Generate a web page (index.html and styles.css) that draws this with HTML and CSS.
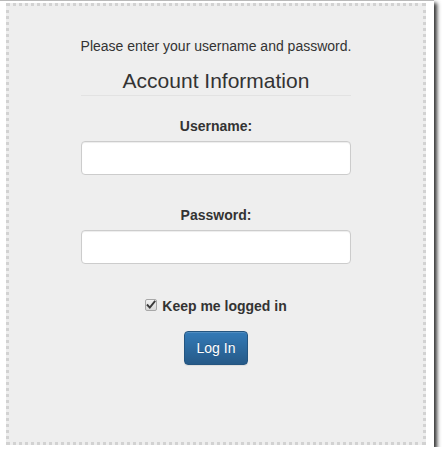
FILE: index.html
```html
<!DOCTYPE html>
<html lang="en">
<head>
<meta charset="utf-8">
<title>Log In</title>
<link rel="stylesheet" href="styles.css">
</head>
<body>
<div class="frame">
  <div class="panel">
    <form class="login">
      <p class="intro">Please enter your username and password.</p>
      <h3 class="legend">Account Information</h3>
      <div class="group first">
        <label class="field-label" for="user">Username:</label>
        <input class="field" id="user" type="text">
      </div>
      <div class="group">
        <label class="field-label" for="pass">Password:</label>
        <input class="field" id="pass" type="password">
      </div>
      <label class="remember">
        <span class="box"><svg width="12" height="12" viewBox="0 0 12 12"><path d="M2.6 6.2 L4.8 8.6 L9.6 2.6" fill="none" stroke="#3a3a3a" stroke-width="1.9" stroke-linecap="square"/></svg></span>
        <span>Keep me logged in</span>
      </label>
      <div class="actions">
        <button class="btn" type="button">Log In</button>
      </div>
    </form>
  </div>
</div>
</body>
</html>
```
FILE: styles.css
```css
html, body {
  margin: 0;
  padding: 0;
  background: #ffffff;
}
body {
  font-family: "Liberation Sans", Arial, sans-serif;
  font-size: 14px;
  line-height: 20px;
  color: #333333;
}
.frame {
  width: 434px;
  height: 447px;
  box-sizing: border-box;
  padding: 1px 8px 3px 6px;
  background: #ffffff;
  border-top: 1px solid #b9b9b9;
  box-shadow: 3px 3px 4px rgba(0, 0, 0, 0.8);
}
.panel {
  box-sizing: border-box;
  width: 420px;
  height: 442px;
  margin-top: 1px;
  background: #eeeeee;
  border: 3px dotted #d2d2d2;
  padding-top: 30px;
}
.login {
  width: 270px;
  margin: 0 auto;
  text-align: center;
}
.intro {
  margin: 0 -30px;
  line-height: 20px;
  white-space: nowrap;
}
.legend {
  margin: 13px 0 0;
  font-size: 21px;
  font-weight: normal;
  line-height: 24px;
  padding-bottom: 2px;
  border-bottom: 1px solid #e2e2e2;
  color: #333333;
}
.group {
  display: flex;
  flex-direction: column;
  gap: 5px;
  margin-top: 30px;
}
.group.first {
  margin-top: 20px;
}
.field-label {
  font-weight: bold;
  line-height: 20px;
}
.field {
  box-sizing: border-box;
  height: 34px;
  width: 100%;
  margin: 0;
  padding: 6px 12px;
  border: 1px solid #cccccc;
  border-radius: 4px;
  background: #ffffff;
  box-shadow: inset 0 1px 1px rgba(0, 0, 0, 0.075);
  font: inherit;
}
.remember {
  display: flex;
  justify-content: center;
  align-items: center;
  gap: 5px;
  margin-top: 32px;
  font-weight: bold;
  line-height: 20px;
}
.box {
  display: inline-flex;
  width: 12px;
  height: 12px;
  box-sizing: border-box;
  border: 1px solid #a8a8a8;
  border-radius: 2px;
  background: linear-gradient(#f2f2f2, #d9d9d9);
  margin-top: -3px;
  position: relative;
}
.box svg {
  position: absolute;
  left: -1px;
  top: -1px;
}
.actions {
  margin-top: 15px;
  display: flex;
  justify-content: center;
}
.btn {
  height: 34px;
  padding: 6px 12px;
  font: inherit;
  font-size: 14px;
  line-height: 20px;
  color: #ffffff;
  border: 1px solid #245580;
  border-radius: 4px;
  background: linear-gradient(to bottom, #337ab7 0%, #265a88 100%);
  text-shadow: 0 -1px 0 rgba(0, 0, 0, 0.2);
  box-shadow: inset 0 1px 0 rgba(255, 255, 255, 0.15), 0 1px 1px rgba(0, 0, 0, 0.075);
}
```
